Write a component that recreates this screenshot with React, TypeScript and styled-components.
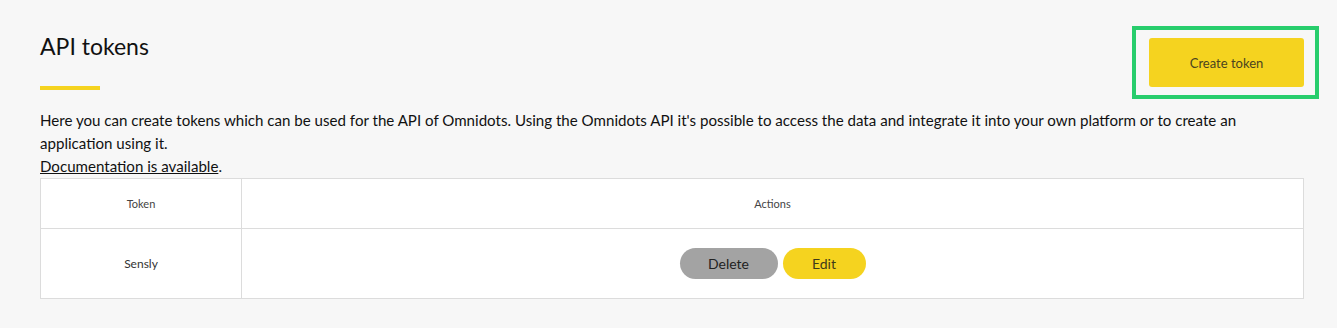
import React from "react";
import styled, { createGlobalStyle } from "styled-components";

const GlobalStyle = createGlobalStyle`
  html, body {
    margin: 0;
    padding: 0;
    background: #f7f7f7;
  }
  body {
    font-family: Lato, "Noto Sans", sans-serif;
    color: #111;
  }
`;

const Page = styled.div`
  padding: 26px 18px 0 40px;
  width: 1337px;
  box-sizing: border-box;
`;

const Header = styled.div`
  display: flex;
  justify-content: space-between;
  align-items: flex-start;
`;

const TitleBlock = styled.div`
  display: flex;
  flex-direction: column;
  padding-top: 5px;
`;

const Title = styled.h1`
  margin: 0;
  font-size: 23px;
  font-weight: 400;
  line-height: 30px;
  color: #111;
`;

const TitleBar = styled.div`
  width: 60px;
  height: 4px;
  background: #f5d31f;
  margin-top: 25px;
`;

const Highlight = styled.div`
  border: 4px solid #27cd6c;
  padding: 8px 11px 8px 13px;
`;

const PrimaryButton = styled.button`
  width: 155px;
  height: 49px;
  border: none;
  border-radius: 3px;
  background: #f5d31f;
  color: #4a4320;
  font-family: inherit;
  font-size: 13px;
  cursor: pointer;
`;

const Intro = styled.p`
  margin: 10px 0 0 0;
  width: 1264px;
  font-size: 15.1px;
  line-height: 23px;
  color: #111;
`;

const DocLink = styled.a`
  color: #111;
  text-decoration: underline;
`;

const Table = styled.table`
  width: 1264px;
  border-collapse: collapse;
  background: #fff;
  margin-top: 0;
`;

const Th = styled.th<{ $w?: number }>`
  border: 1px solid #dcdcdc;
  height: 49px;
  font-weight: 400;
  font-size: 11px;
  color: #444;
  text-align: center;
  padding: 0;
  width: ${(p) => (p.$w ? `${p.$w}px` : "auto")};
`;

const Td = styled.td`
  border: 1px solid #dcdcdc;
  height: 69px;
  font-size: 12px;
  color: #333;
  text-align: center;
  padding: 0;
`;

const Actions = styled.div`
  display: flex;
  justify-content: center;
  gap: 5px;
`;

const PillButton = styled.button<{ $variant: "grey" | "yellow"; $w: number }>`
  width: ${(p) => p.$w}px;
  height: 31px;
  border: none;
  border-radius: 16px;
  background: ${(p) => (p.$variant === "grey" ? "#a3a3a3" : "#f5d31f")};
  color: ${(p) => (p.$variant === "grey" ? "#222" : "#3e3a1a")};
  font-family: inherit;
  font-size: 14px;
  cursor: pointer;
  padding: 0;
`;

export default function App() {
  return (
    <>
      <GlobalStyle />
      <Page>
        <Header>
          <TitleBlock>
            <Title>API tokens</Title>
            <TitleBar />
          </TitleBlock>
          <Highlight>
            <PrimaryButton>Create token</PrimaryButton>
          </Highlight>
        </Header>
        <Intro>
          Here you can create tokens which can be used for the API of Omnidots. Using the Omnidots API it's
          possible to access the data and integrate it into your own platform or to create an application using it.
          <br />
          <DocLink href="#">Documentation is available</DocLink>.
        </Intro>
        <Table>
          <thead>
            <tr>
              <Th $w={200}>Token</Th>
              <Th>Actions</Th>
            </tr>
          </thead>
          <tbody>
            <tr>
              <Td>Sensly</Td>
              <Td>
                <Actions>
                  <PillButton $variant="grey" $w={98}>Delete</PillButton>
                  <PillButton $variant="yellow" $w={83}>Edit</PillButton>
                </Actions>
              </Td>
            </tr>
          </tbody>
        </Table>
      </Page>
    </>
  );
}
